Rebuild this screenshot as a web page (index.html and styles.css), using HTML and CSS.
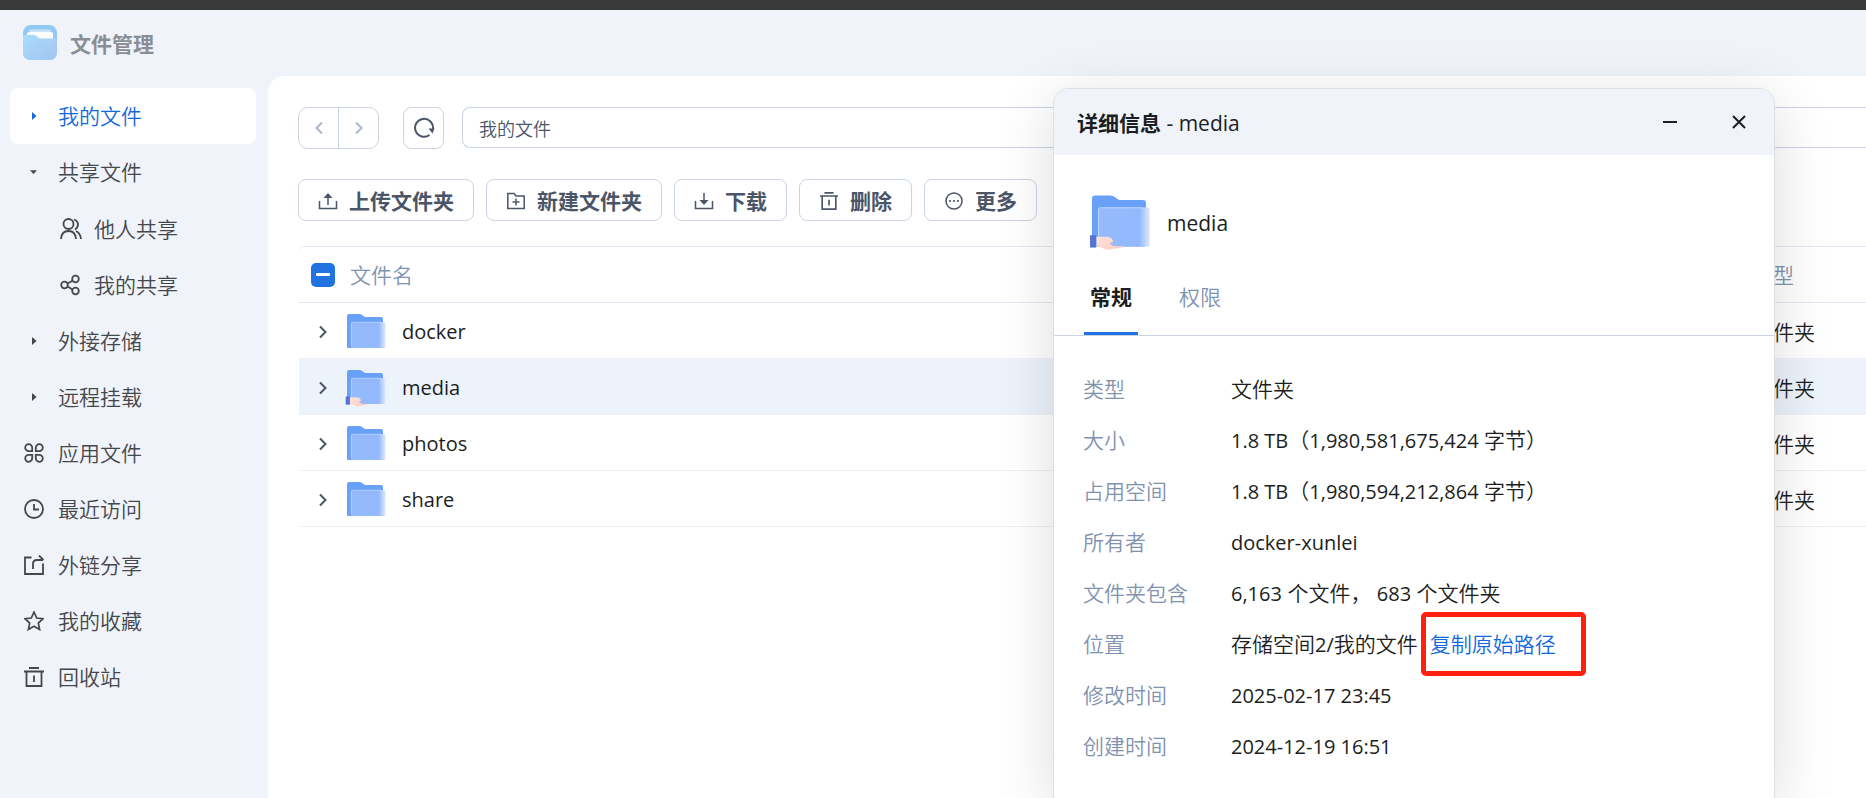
FILE: index.html
```html
<!DOCTYPE html>
<html lang="zh-CN">
<head>
    <meta charset="UTF-8">
    <meta name="viewport" content="width=device-width, initial-scale=1.0">
    <title>文件管理</title>
    <link rel="stylesheet" href="styles.css">
</head>
<body>

<!-- Shared icons -->
<svg class="sprite" aria-hidden="true">
    <defs>
        <linearGradient id="front" x1="0" x2="1" y1="0" y2="0">
            <stop offset="0" stop-color="#96bafc"/>
            <stop offset="0.8" stop-color="#93b9fc"/>
            <stop offset="1" stop-color="#dfeafe"/>
        </linearGradient>
        <linearGradient id="logo-back" x1="0" x2="0" y1="0" y2="1">
            <stop offset="0" stop-color="#8fcbf6"/>
            <stop offset="1" stop-color="#9dc5f5"/>
        </linearGradient>
        <linearGradient id="logo-front" x1="0" x2="1" y1="0" y2="1">
            <stop offset="0" stop-color="#aadcfa"/>
            <stop offset="1" stop-color="#a3c4f3"/>
        </linearGradient>
        <linearGradient id="skin" x1="0" x2="1" y1="0" y2="1">
            <stop offset="0" stop-color="#fde4dc"/>
            <stop offset="1" stop-color="#fdc9bd"/>
        </linearGradient>
    </defs>
    <symbol id="folder" viewBox="-2 -1 42 38">
        <path d="M0 33V2Q0 0 2 0H12Q14 0 15.500 1.200L18 3H34Q36 3 36 5V33Q36 34 34 34H2Q0 34 0 33Z" fill="#6aa1f8"/>
        <rect x="4" y="8" width="34.500" height="26" rx="1.500" fill="url(#front)"/>
        <path d="M4.300 33V9.500Q4.300 8.200 5.500 8.200H34" fill="none" stroke="#c3d9ff" stroke-width="0.600"/>
    </symbol>
    <symbol id="hand" viewBox="-2 -1 42 38">
        <rect x="-1.300" y="26.500" width="4" height="8.200" fill="#5672d2"/>
        <path d="M3 27.500H11Q14 28.500 14 31L12 31.500Q12.500 33.500 15 33.800H20.500Q20 35.300 14 35.500Q11 36.800 8 35.500L3 33.500Z" fill="url(#skin)"/>
    </symbol>
    <symbol id="chevron" viewBox="0 0 16 16">
        <path d="M5 2.500L10.500 8L5 13.500" fill="none" stroke="currentColor" stroke-width="2"/>
    </symbol>
    <symbol id="trash" viewBox="0 0 20 20">
        <path d="M5 1H15M0 4.500H20M2.500 4.500V19H17.500V4.500M10 8.500V15" fill="none" stroke="currentColor" stroke-width="1.800"/>
    </symbol>
</svg>

<div class="titlebar"></div>

<div class="app">
    <header class="app-header">
        <svg class="logo" viewBox="0 0 34 35">
            <rect width="34" height="35" rx="8" fill="url(#logo-back)"/>
            <path d="M7 4.500H27L29 9H5Z" fill="#c9e2f7"/>
            <path d="M4 9Q4 7 6 7H28Q30 7 30 9V16H4Z" fill="#fafbfb"/>
            <path d="M0 10H11Q13 10 14.500 12Q16 13.500 18 13.500H34V27Q34 35 26 35H8Q0 35 0 27Z" fill="url(#logo-front)"/>
        </svg>
        <h1>文件管理</h1>
    </header>

    <div class="layout">
        <nav class="sidebar">
            <ul class="nav-list">
                <li><a class="nav-item active" href="#"><svg class="nav-icon" viewBox="0 0 20 20"><path d="M8 6V14L12.500 10Z" fill="currentColor"/></svg>我的文件</a></li>
                <li>
                    <a class="nav-item" href="#"><svg class="nav-icon" viewBox="0 0 20 20"><path d="M6 8.200H13L9.500 12Z" fill="currentColor"/></svg>共享文件</a>
                    <ul class="nav-sub">
                        <li><a class="nav-item" href="#"><svg class="nav-icon sub" viewBox="0 0 22 22"><g fill="none" stroke="currentColor" stroke-width="1.800"><circle cx="8.500" cy="6" r="5"/><path d="M1 21Q1.500 13 8.500 13T16 21M14 1.500Q18 3 18 6.500Q18 9.500 15 11.500M16 13Q20.500 15.500 21 21"/></g></svg>他人共享</a></li>
                        <li><a class="nav-item" href="#"><svg class="nav-icon sub" viewBox="0 0 22 22"><g fill="none" stroke="currentColor" stroke-width="1.800"><circle cx="4.500" cy="11" r="3.300"/><circle cx="15.500" cy="5" r="3.300"/><circle cx="15.500" cy="17" r="3.300"/><path d="M7.500 9.500L12.500 6.700M7.500 12.500L12.500 15.500"/></g></svg>我的共享</a></li>
                    </ul>
                </li>
                <li><a class="nav-item" href="#"><svg class="nav-icon" viewBox="0 0 20 20"><path d="M8 6V14L12.500 10Z" fill="currentColor"/></svg>外接存储</a></li>
                <li><a class="nav-item" href="#"><svg class="nav-icon" viewBox="0 0 20 20"><path d="M8 6V14L12.500 10Z" fill="currentColor"/></svg>远程挂载</a></li>
                <li><a class="nav-item" href="#"><svg class="nav-icon" viewBox="0 0 20 20"><path d="M8.200 8.200H4.800A3.500 3.500 0 1 1 8.200 4.800ZM11.800 8.200V4.800A3.500 3.500 0 1 1 15.200 8.200ZM8.200 11.800V15.200A3.500 3.500 0 1 1 4.800 11.800ZM11.800 11.800H15.200A3.500 3.500 0 1 1 11.800 15.200Z" fill="none" stroke="currentColor" stroke-width="1.800"/></svg>应用文件</a></li>
                <li><a class="nav-item" href="#"><svg class="nav-icon" viewBox="0 0 20 20"><path d="M10 5V10.500H15" fill="none" stroke="currentColor" stroke-width="1.800"/><circle cx="10" cy="10" r="9" fill="none" stroke="currentColor" stroke-width="1.800"/></svg>最近访问</a></li>
                <li><a class="nav-item" href="#"><svg class="nav-icon" viewBox="0 0 20 20"><path d="M7.500 2.500H1V19H19V8.500M9 14V9Q9 5 13 5H19M15 0.500L19.500 5" fill="none" stroke="currentColor" stroke-width="1.800"/></svg>外链分享</a></li>
                <li><a class="nav-item" href="#"><svg class="nav-icon" viewBox="0 0 20 20"><path d="M10 1L12.700 7L19 7.700L14.300 12L15.600 18.500L10 15.300L4.400 18.500L5.700 12L1 7.700L7.300 7Z" fill="none" stroke="currentColor" stroke-width="1.700"/></svg>我的收藏</a></li>
                <li><a class="nav-item" href="#"><svg class="nav-icon"><use href="#trash"/></svg>回收站</a></li>
            </ul>
        </nav>

        <main class="main">
            <div class="path-bar">
                <div class="history">
                    <button type="button" aria-label="后退"><svg class="back"><use href="#chevron"/></svg></button>
                    <button type="button" aria-label="前进"><svg><use href="#chevron"/></svg></button>
                </div>
                <button class="refresh" type="button" aria-label="刷新">
                    <svg viewBox="0 0 22 22"><path d="M16.500 18A9 9 0 1 1 20 12" fill="none" stroke="currentColor" stroke-width="2"/><path d="M15.500 11.500H21.500L19.500 16.500Z" fill="currentColor"/></svg>
                </button>
                <input class="path-input" type="text" value="我的文件" aria-label="路径">
            </div>

            <div class="toolbar">
                <button type="button"><svg viewBox="0 0 20 20"><path d="M1.500 10V17.500H18.500V10M10 14V4" fill="none" stroke="currentColor" stroke-width="1.500"/><path d="M5.500 7L10 2L14.500 7Z" fill="currentColor"/></svg>上传文件夹</button>
                <button type="button"><svg viewBox="0 0 20 20"><path d="M1.800 2.500H8L10 5H18.200V17.500H1.800ZM10 7.500V14.500M6.500 11H13.500" fill="none" stroke="currentColor" stroke-width="1.500"/></svg>新建文件夹</button>
                <button type="button"><svg viewBox="0 0 20 20"><path d="M1.500 10V17.500H18.500V10M10 2V11" fill="none" stroke="currentColor" stroke-width="1.500"/><path d="M5.500 9L10 14L14.500 9Z" fill="currentColor"/></svg>下载</button>
                <button type="button"><svg viewBox="-1 -1 22 22"><use href="#trash" width="20" height="20"/></svg>删除</button>
                <button type="button"><svg viewBox="0 0 20 20"><circle cx="10" cy="10" r="8" fill="none" stroke="currentColor" stroke-width="1.500"/><circle cx="6" cy="10" r="1.100" fill="currentColor"/><circle cx="10" cy="10" r="1.100" fill="currentColor"/><circle cx="14" cy="10" r="1.100" fill="currentColor"/></svg>更多</button>
            </div>

            <table class="file-table">
                <thead>
                    <tr>
                        <th><div class="name-cell head"><input class="check" type="checkbox" aria-label="全选">文件名</div></th>
                        <th class="type">类型</th>
                    </tr>
                </thead>
                <tbody>
                    <tr>
                        <td><div class="name-cell"><svg class="expand"><use href="#chevron"/></svg><svg class="folder"><use href="#folder"/></svg><span class="en">docker</span></div></td>
                        <td class="type">文件夹</td>
                    </tr>
                    <tr class="selected">
                        <td><div class="name-cell"><svg class="expand"><use href="#chevron"/></svg><svg class="folder"><use href="#folder"/><use href="#hand"/></svg><span class="en">media</span></div></td>
                        <td class="type">文件夹</td>
                    </tr>
                    <tr>
                        <td><div class="name-cell"><svg class="expand"><use href="#chevron"/></svg><svg class="folder"><use href="#folder"/></svg><span class="en">photos</span></div></td>
                        <td class="type">文件夹</td>
                    </tr>
                    <tr>
                        <td><div class="name-cell"><svg class="expand"><use href="#chevron"/></svg><svg class="folder"><use href="#folder"/></svg><span class="en">share</span></div></td>
                        <td class="type">文件夹</td>
                    </tr>
                </tbody>
            </table>
        </main>
    </div>
</div>

<!-- Details window -->
<section class="dialog" role="dialog" aria-labelledby="dialog-title">
    <header class="dialog-header">
        <h2 id="dialog-title">详细信息 <span class="en">- media</span></h2>
        <button type="button" aria-label="最小化"><svg viewBox="0 0 16 16"><path d="M1 8H15" stroke="currentColor" stroke-width="2"/></svg></button>
        <button type="button" aria-label="关闭"><svg viewBox="0 0 16 16"><path d="M2 2L14 14M14 2L2 14" stroke="currentColor" stroke-width="2"/></svg></button>
    </header>
    <div class="summary">
        <svg class="folder-large"><use href="#folder"/><use href="#hand"/></svg>
        <span class="en">media</span>
    </div>
    <div class="tabs" role="tablist">
        <button class="tab active" type="button" role="tab" aria-selected="true">常规</button>
        <button class="tab" type="button" role="tab" aria-selected="false">权限</button>
    </div>
    <dl class="details">
        <dt>类型</dt>
        <dd>文件夹</dd>
        <dt>大小</dt>
        <dd><span class="en">1.8 TB</span>（<span class="en">1,980,581,675,424</span> 字节）</dd>
        <dt>占用空间</dt>
        <dd><span class="en">1.8 TB</span>（<span class="en">1,980,594,212,864</span> 字节）</dd>
        <dt>所有者</dt>
        <dd><span class="en">docker-xunlei</span></dd>
        <dt>文件夹包含</dt>
        <dd><span class="en">6,163</span> 个文件， <span class="en">683</span> 个文件夹</dd>
        <dt>位置</dt>
        <dd>存储空间<span class="en">2/</span>我的文件<a class="copy-path" href="#">复制原始路径</a></dd>
        <dt>修改时间</dt>
        <dd><span class="en">2025-02-17 23:45</span></dd>
        <dt>创建时间</dt>
        <dd><span class="en">2024-12-19 16:51</span></dd>
    </dl>
</section>

</body>
</html>
```

FILE: styles.css
```css
* {
    box-sizing: border-box;
}
body {
    margin: 0;
    height: 100vh;
    overflow: hidden;
    position: relative;
    display: flex;
    flex-direction: column;
    background-color: #f0f3f9;
    color: #1b1e22;
    font-family: "Open Sans", "Noto Sans CJK SC", sans-serif;
    font-size: 21px;
    font-weight: 350;
    line-height: 28px;
}
h1, h2, ul, dl, dd {
    margin: 0;
    padding: 0;
}
ul {
    list-style: none;
}
a {
    text-decoration: none;
}
button, input {
    font: inherit;
    color: inherit;
}
button {
    display: flex;
    align-items: center;
    justify-content: center;
    padding: 0;
    border: none;
    background: none;
    cursor: pointer;
}
svg {
    flex: none;
    display: block;
}
.sprite {
    position: absolute;
    width: 0;
    height: 0;
}
/* latin text and digits */
.en {
    font-size: 20px;
    font-weight: 400;
}

.titlebar {
    flex: none;
    height: 10px;
    background-color: #3a3a3a;
}
.app {
    flex: 1;
    display: flex;
    flex-direction: column;
}
.app-header {
    display: flex;
    align-items: center;
    gap: 13px;
    height: 66px;
    padding: 0 23px 1px;
}
.app-header h1 {
    padding-top: 3px;
    font-size: 21px;
    font-weight: 700;
    color: #8a8e94;
}
.logo {
    width: 34px;
    height: 35px;
}
.layout {
    flex: 1;
    display: flex;
}

/* Sidebar */
.sidebar {
    flex: none;
    width: 268px;
    padding: 12px 12px 0 10px;
}
.nav-item {
    display: flex;
    align-items: center;
    gap: 14px;
    height: 56px;
    padding-left: 14px;
    border-radius: 8px;
    color: #44474c;
}
.nav-item.active {
    background-color: white;
    color: #1468de;
}
.nav-icon {
    width: 20px;
    height: 20px;
}
.nav-sub {
    padding-top: 1px;
}
.nav-sub .nav-item {
    gap: 12px;
    padding-left: 50px;
}
.nav-icon.sub {
    width: 22px;
    height: 22px;
}

/* Main panel */
.main {
    flex: 1;
    padding: 31px 0 0 30px;
    background-color: white;
    border-top-left-radius: 16px;
}
.path-bar {
    display: flex;
    color: #4a5568;
}
.history {
    display: flex;
    width: 81px;
    height: 42px;
    border: 1px solid #c9d4e0;
    border-radius: 10px;
    color: #a7b7cd;
}
.history button {
    flex: 1;
}
.history button + button {
    border-left: 1px solid #c9d4e0;
}
.history svg {
    width: 16px;
    height: 16px;
}
.history .back {
    transform: scaleX(-1);
}
.refresh {
    width: 41px;
    height: 42px;
    margin: 0 18px 0 24px;
    border: 1px solid #c9d4e0;
    border-radius: 8px;
}
.refresh svg {
    width: 22px;
    height: 22px;
}
.path-input {
    flex: 1;
    height: 41px;
    padding: 0 16px;
    border: 1px solid #c9d4e0;
    border-right: none;
    border-radius: 8px 0 0 8px;
    background: none;
    font-size: 18px;
}
.toolbar {
    display: flex;
    gap: 12px;
    margin-top: 30px;
}
.toolbar button {
    gap: 11px;
    height: 42px;
    padding: 2px 19px 0;
    border: 1px solid #c9d4e0;
    border-radius: 8px;
    color: #4a5568;
    font-weight: 700;
}
.toolbar svg {
    width: 20px;
    height: 20px;
}

/* File list */
.file-table {
    width: calc(100% - 1px);
    margin: 25px 0 0 1px;
    border-top: 1px solid #e0e6f0;
    border-top-left-radius: 6px;
    border-spacing: 0;
}
.file-table th,
.file-table td {
    height: 56px;
    padding: 0;
    border-bottom: 1px solid #eef1f6;
    text-align: left;
    font-weight: 350;
}
.file-table td {
    padding-top: 2px;
}
.file-table th {
    border-color: #e0e6f0;
    color: #7f93b0;
}
.file-table .type {
    width: 114px;
}
.file-table .selected td {
    background-color: #edf3fb;
}
.name-cell {
    display: flex;
    align-items: center;
    padding-left: 16px;
}
.name-cell.head {
    gap: 15px;
    padding-left: 12px;
}
.check {
    appearance: none;
    display: flex;
    align-items: center;
    justify-content: center;
    width: 24px;
    height: 24px;
    margin: 0;
    border-radius: 5px;
    background-color: #2073e0;
}
.check::before {
    content: "";
    width: 14px;
    height: 3px;
    border-radius: 1px;
    background-color: white;
}
.expand {
    width: 16px;
    height: 16px;
    color: #4a5568;
}
.folder {
    width: 42px;
    height: 38px;
    margin: 0 15px 0 14px;
}

/* Details window */
.dialog {
    position: absolute;
    top: 88px;
    right: 91px;
    bottom: 0;
    width: 722px;
    border: 1px solid #dcdfe3;
    border-bottom: none;
    border-radius: 16px 16px 0 0;
    background-color: white;
    box-shadow: 0 12px 60px rgba(0, 0, 0, 0.14);
    overflow: hidden;
}
.dialog-header {
    display: flex;
    align-items: center;
    height: 66px;
    padding: 0 20px 0 23px;
    background-color: #f0f3f9;
}
.dialog-header h2 {
    flex: 1;
    padding-top: 2px;
    font-size: 21px;
    font-weight: 700;
}
.dialog-header h2 .en,
.summary .en {
    font-size: 21px;
    font-weight: 500;
}
.dialog-header button {
    width: 30px;
    height: 30px;
}
.dialog-header button + button {
    margin-left: 39px;
}
.dialog-header svg {
    width: 16px;
    height: 16px;
}
.summary {
    display: flex;
    align-items: center;
    gap: 15px;
    padding: 39px 0 0 35px;
}
.folder-large {
    width: 63px;
    height: 57px;
}
.tabs {
    display: flex;
    gap: 35px;
    margin-top: 8px;
    padding-left: 30px;
    border-bottom: 1px solid #c9d4e0;
}
.tab {
    height: 76px;
    padding: 2px 6px 0;
    border-bottom: 3px solid transparent;
    color: #7f93b0;
}
.tab.active {
    border-color: #2073e0;
    color: #1b1e22;
    font-weight: 700;
}
.details {
    display: grid;
    grid-template-columns: 148px 1fr;
    padding: 28px 0 0 29px;
    line-height: 51px;
}
.details dt {
    color: #7f93b0;
}
.copy-path {
    position: relative;
    margin-left: 12px;
    color: #1468de;
}
/* highlight frame round the link */
.copy-path::after {
    content: "";
    position: absolute;
    top: -18px;
    right: -30px;
    bottom: -18px;
    left: -9px;
    border: 5px solid #ff2010;
    border-radius: 5px;
}
```
